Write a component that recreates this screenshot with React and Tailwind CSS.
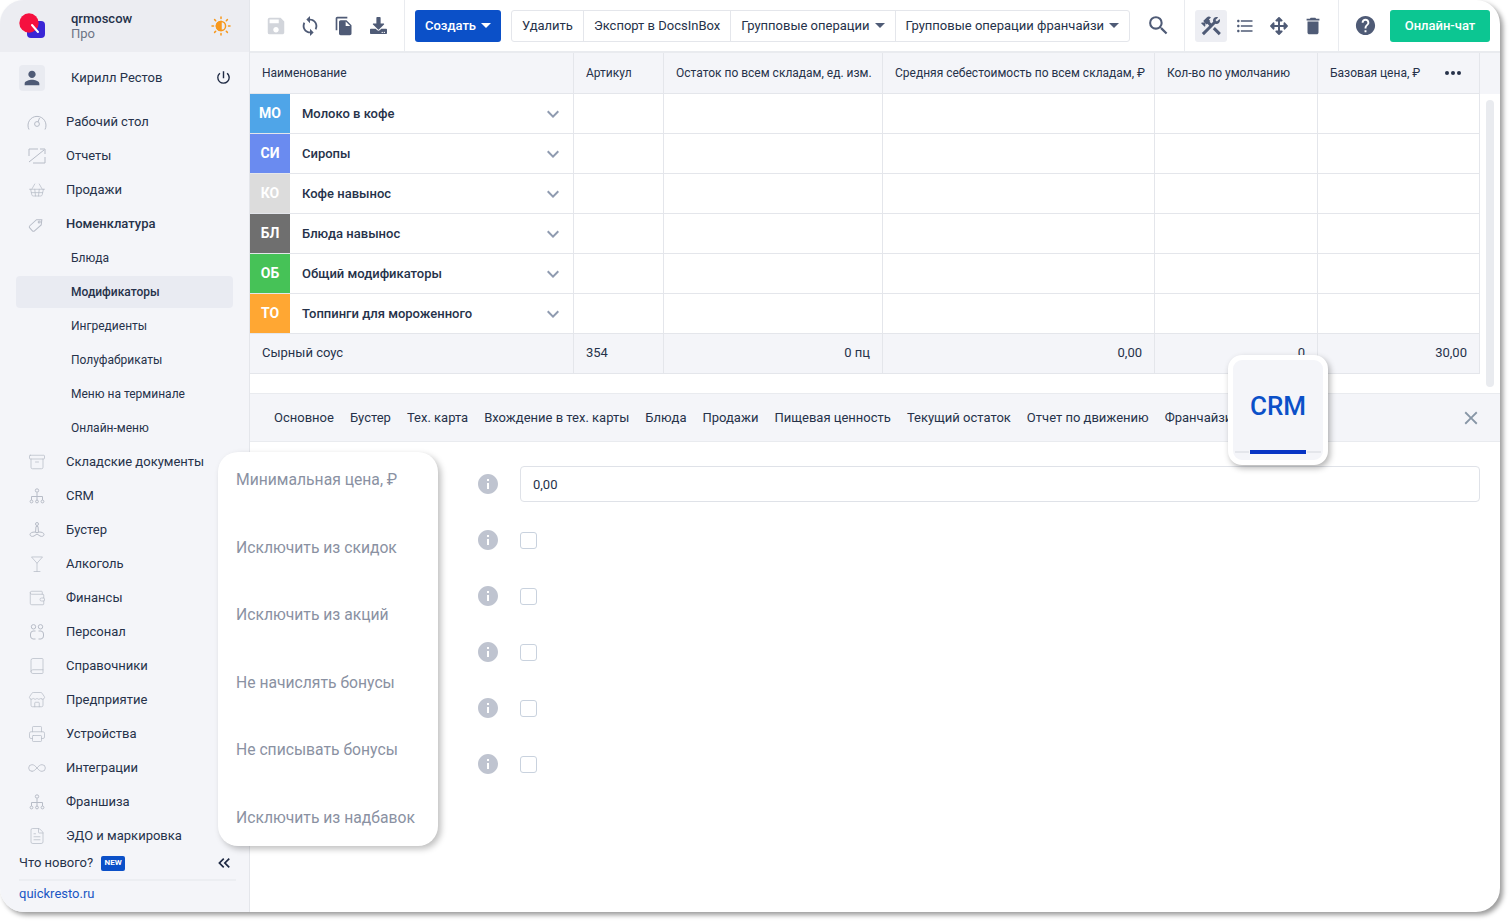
import {
  Archive,
  Book,
  FileText,
  Infinity as InfinityIcon,
  Martini,
  Printer,
  ShoppingBasket,
  Store,
  Wallet,
} from 'lucide-react';
import {
  MdClose,
  MdConstruction,
  MdDelete,
  MdFileCopy,
  MdFormatListBulleted,
  MdHelp,
  MdInfo,
  MdKeyboardArrowDown,
  MdKeyboardDoubleArrowLeft,
  MdPerson,
  MdPowerSettingsNew,
  MdSave,
  MdSearch,
  MdSync,
} from 'react-icons/md';
import { FaArrowsAlt, FaDownload } from 'react-icons/fa';

const font = { fontFamily: 'Roboto, sans-serif' };

function GaugeIcon() {
  return (
    <svg width="20" height="18" viewBox="0 0 20 18" fill="none" stroke="currentColor" strokeWidth="1">
      <path d="M2 16.5a9 9 0 1 1 16 0" />
      <circle cx="10" cy="11" r="2.4" />
      <path d="M11 9l1.5-4" />
    </svg>
  );
}

function ReportIcon() {
  return (
    <svg width="18" height="16" viewBox="0 0 18 16" fill="none" stroke="currentColor" strokeWidth="1">
      <path d="M1 1v7M1 1h9M1 14L16 2M12 1h5v5M17 9v6H5" />
    </svg>
  );
}

function TagIcon() {
  return (
    <svg width="18" height="18" viewBox="0 0 18 18" fill="none" stroke="currentColor" strokeWidth="1">
      <g transform="rotate(-42 9 9)">
        <path d="M2.5 5.5h9l4 3.5-4 3.5h-9a1.5 1.5 0 0 1-1.5-1.5V7a1.5 1.5 0 0 1 1.5-1.5z" />
        <circle cx="12" cy="9" r="1" />
      </g>
    </svg>
  );
}

function TreeIcon() {
  return (
    <svg width="16" height="16" viewBox="0 0 16 16" fill="none" stroke="currentColor" strokeWidth="1">
      <circle cx="8" cy="2.5" r="1.7" />
      <path d="M8 4.5v4M2.5 12V8.5h11V12M8 8.5V12" />
      <circle cx="2.5" cy="13.5" r="1.4" />
      <circle cx="8" cy="13.5" r="1.4" />
      <circle cx="13.5" cy="13.5" r="1.4" />
    </svg>
  );
}

function BoosterIcon() {
  return (
    <svg width="16" height="16" viewBox="0 0 16 16" fill="none" stroke="currentColor" strokeWidth="1">
      <circle cx="8" cy="2" r="1.5" />
      <path d="M7 4.5h2l.5 6h-3zM6 10c-3 0-5 1-5 2.5S3 15 5 14l3-2 3 2c2 1 4 0 4-1.5S13 10 10 10" />
    </svg>
  );
}

function StaffIcon() {
  return (
    <svg width="16" height="16" viewBox="0 0 16 16" fill="none" stroke="currentColor" strokeWidth="1">
      <circle cx="4.5" cy="2.8" r="2.2" />
      <circle cx="11.5" cy="2.8" r="2.2" />
      <path d="M6.5 7H4a3 3 0 0 0-2.5 3v2A3 3 0 0 0 4 15h2.5M9.5 7H12a3 3 0 0 1 2.5 3v2A3 3 0 0 1 12 15H9.5" />
    </svg>
  );
}

function SunIcon() {
  return (
    <svg width="20" height="20" viewBox="0 0 20 20" fill="none" stroke="#f7981d" strokeWidth="1.5" strokeLinecap="round">
      <circle cx="10" cy="10" r="4.6" />
      <path d="M10 5.4a4.6 4.6 0 0 0 0 9.2z" fill="#f7981d" />
      <path d="M10 1v1.5M10 17.5V19M1 10h1.5M17.5 10H19M3.6 3.6l1.1 1.1M15.3 15.3l1.1 1.1M3.6 16.4l1.1-1.1M15.3 4.7l1.1-1.1" />
    </svg>
  );
}

const lucide = { size: 18, strokeWidth: 1 };

const navTop = [
  { label: 'Рабочий стол', icon: <GaugeIcon /> },
  { label: 'Отчеты', icon: <ReportIcon /> },
  { label: 'Продажи', icon: <ShoppingBasket {...lucide} /> },
  { label: 'Номенклатура', icon: <TagIcon />, bold: true },
];

const subItems = ['Блюда', 'Модификаторы', 'Ингредиенты', 'Полуфабрикаты', 'Меню на терминале', 'Онлайн-меню'];

const navBottom = [
  { label: 'Складские документы', icon: <Archive {...lucide} /> },
  { label: 'CRM', icon: <TreeIcon /> },
  { label: 'Бустер', icon: <BoosterIcon /> },
  { label: 'Алкоголь', icon: <Martini {...lucide} /> },
  { label: 'Финансы', icon: <Wallet {...lucide} /> },
  { label: 'Персонал', icon: <StaffIcon /> },
  { label: 'Справочники', icon: <Book {...lucide} /> },
  { label: 'Предприятие', icon: <Store {...lucide} /> },
  { label: 'Устройства', icon: <Printer {...lucide} /> },
  { label: 'Интеграции', icon: <InfinityIcon size={20} strokeWidth={1} /> },
  { label: 'Франшиза', icon: <TreeIcon /> },
  { label: 'ЭДО и маркировка', icon: <FileText {...lucide} /> },
];

const groups = [
  { tag: 'МО', name: 'Молоко в кофе', color: 'bg-[#4fa5e8]' },
  { tag: 'СИ', name: 'Сиропы', color: 'bg-[#6a8bf0]' },
  { tag: 'КО', name: 'Кофе навынос', color: 'bg-[#dcdcdc]' },
  { tag: 'БЛ', name: 'Блюда навынос', color: 'bg-[#6f6f6f]' },
  { tag: 'ОБ', name: 'Общий модификаторы', color: 'bg-[#46c257]' },
  { tag: 'ТО', name: 'Топпинги для мороженного', color: 'bg-[#ffa733]' },
];

const tabs = [
  'Основное',
  'Бустер',
  'Тех. карта',
  'Вхождение в тех. карты',
  'Блюда',
  'Продажи',
  'Пищевая ценность',
  'Текущий остаток',
  'Отчет по движению',
  'Франчайзи',
];

const labels = [
  'Минимальная цена, ₽',
  'Исключить из скидок',
  'Исключить из акций',
  'Не начислять бонусы',
  'Не списывать бонусы',
  'Исключить из надбавок',
];

const cols = 'grid grid-cols-[324px_90px_219px_272px_163px_162px] w-[1230px]';
const cell = 'border-r border-b border-[#e4e6eb] h-10';

function NavRow({ item }) {
  return (
    <div className="flex h-[34px] items-center pl-[19px]">
      <span className="flex w-9 justify-center text-[#b7bcc7]">{item.icon}</span>
      <span className={`ml-[-8px] pl-[19px] text-[13px] text-[#26324a] ${item.bold ? 'font-medium' : ''}`}>
        {item.label}
      </span>
    </div>
  );
}

function Sidebar() {
  return (
    <aside className="flex w-[250px] shrink-0 flex-col rounded-tl-[24px] rounded-bl-[24px] border-r border-[#e4e6eb] bg-[#f4f5f9]">
      <div className="flex h-[52px] items-center rounded-tl-[24px] bg-[#ecedf2] pl-[19px] pr-[18px]">
        <svg width="26" height="26" viewBox="0 0 26 26" className="shrink-0">
          <rect x="8" y="8" width="18" height="17" rx="4" fill="#3a26d6" />
          <circle cx="10" cy="10" r="9.7" fill="#f5103f" />
          <path d="M13 12l6 7" stroke="#fff" strokeWidth="2" strokeLinecap="round" />
        </svg>
        <div className="ml-[26px] flex-1 text-[13px] leading-[15px]">
          <div className="font-medium text-[#26324a]">qrmoscow</div>
          <div className="text-[#6c7485]">Про</div>
        </div>
        <SunIcon />
      </div>
      <div className="flex h-[53px] items-center pb-0.5 pl-[19px] pr-[17px]">
        <span className="flex h-[26px] w-[26px] items-center justify-center rounded-[4px] bg-[#e9ebf1] text-[#4f5b76]">
          <MdPerson size={22} />
        </span>
        <span className="ml-[26px] flex-1 text-[13px] text-[#26324a]">Кирилл Рестов</span>
        <MdPowerSettingsNew size={17} className="text-[#1f2a44]" />
      </div>
      <nav className="flex flex-col">
        {navTop.map((item) => (
          <NavRow key={item.label} item={item} />
        ))}
        {subItems.map((label, i) => (
          <div key={label} className="flex h-[34px] items-center pl-4 pr-4">
            <span
              className={`flex h-8 w-full items-center rounded-[4px] pl-[55px] text-[12px] text-[#26324a] ${
                i === 1 ? 'bg-[#e9ebf2] font-medium' : ''
              }`}
            >
              {label}
            </span>
          </div>
        ))}
        {navBottom.map((item) => (
          <NavRow key={item.label} item={item} />
        ))}
      </nav>
      <div className="flex flex-col pl-[19px] pr-[13px]">
        <div className="flex h-5 items-center">
          <span className="text-[13px] text-[#26324a]">Что нового?</span>
          <span className="ml-2 flex h-[15px] w-6 items-center justify-center rounded-[2px] bg-[#0b50c8] text-[8px] font-bold text-white">
            NEW
          </span>
          <MdKeyboardDoubleArrowLeft size={20} className="ml-auto mr-[2px] text-[#1f2a44]" />
        </div>
        <div className="mt-[6px] h-0.5 bg-[#eceef2]" />
        <a className="mt-[3px] text-[13px] text-[#1a56c4]">quickresto.ru</a>
      </div>
    </aside>
  );
}

function Toolbar() {
  const ops = [
    { label: 'Удалить' },
    { label: 'Экспорт в DocsInBox' },
    { label: 'Групповые операции', caret: true },
    { label: 'Групповые операции франчайзи', caret: true },
  ];
  return (
    <div className="flex h-[53px] items-center border-b-2 border-[#e9ebef] text-[#4f5b76]">
      <div className="flex h-full w-[155px] items-center border-r border-[#e9ebef] pl-[15px]">
        <MdSave size={22} className="text-[#d2d5db]" />
        <MdSync size={22} className="ml-[12px]" />
        <MdFileCopy size={20} className="ml-[13px]" />
        <FaDownload size={17} className="ml-[16px]" />
      </div>
      <button className="ml-[10px] flex h-8 w-[86px] items-center justify-center gap-[5px] rounded-[3px] bg-[#0b50c8] text-[13px] font-medium text-white">
        Создать
        <span className="border-x-[5px] border-t-[5px] border-x-transparent border-t-white" />
      </button>
      <div className="ml-[10px] flex h-8 w-[619px] rounded-[3px] border border-[#e4e6eb] text-[13px] text-[#26324a]">
        {ops.map((op, i) => (
          <div
            key={op.label}
            className={`flex items-center gap-[5px] whitespace-nowrap px-[10px] ${
              i < ops.length - 1 ? 'border-r border-[#e4e6eb]' : ''
            }`}
          >
            {op.label}
            {op.caret && <span className="border-x-[5px] border-t-[5px] border-x-transparent border-t-[#4f5b76]" />}
          </div>
        ))}
      </div>
      <MdSearch size={25} className="ml-4" />
      <div className="ml-[13px] h-full w-px bg-[#e9ebef]" />
      <span className="ml-[10px] flex h-8 w-8 items-center justify-center rounded-[3px] bg-[#edeef3]">
        <MdConstruction size={24} />
      </span>
      <MdFormatListBulleted size={20} className="ml-2" />
      <FaArrowsAlt size={18} className="ml-[15px]" />
      <MdDelete size={22} className="ml-[14px]" />
      <div className="ml-[14px] h-full w-px bg-[#e9ebef]" />
      <MdHelp size={23} className="ml-[15px]" />
      <button className="ml-[13px] h-8 w-[100px] rounded-[3px] bg-[#0cc692] text-[13px] font-medium text-white">
        Онлайн-чат
      </button>
    </div>
  );
}

function DataTable() {
  const heads = [
    'Наименование',
    'Артикул',
    'Остаток по всем складам, ед. изм.',
    'Средняя себестоимость по всем складам, ₽',
    'Кол-во по умолчанию',
  ];
  return (
    <div className="relative h-[340px]">
      <div className="bg-[#f4f5f9]">
        <div className={`${cols} text-[12px] text-[#26324a]`}>
          {heads.map((h) => (
            <div key={h} className={`${cell} h-[41px] flex items-center pl-3`}>
              {h}
            </div>
          ))}
          <div className={`${cell} h-[41px] flex items-center justify-between pl-3 pr-[18px]`}>
            Базовая цена, ₽
            <span className="flex gap-[2px]">
              <i className="h-1 w-1 rounded-full bg-[#26324a]" />
              <i className="h-1 w-1 rounded-full bg-[#26324a]" />
              <i className="h-1 w-1 rounded-full bg-[#26324a]" />
            </span>
          </div>
        </div>
      </div>
      {groups.map((g) => (
        <div key={g.tag} className={cols}>
          <div className={`${cell} flex items-center`}>
            <span className={`flex h-full w-10 items-center justify-center text-[14px] font-bold text-white ${g.color}`}>
              {g.tag}
            </span>
            <span className="ml-3 flex-1 text-[13px] font-medium text-[#26324a]">{g.name}</span>
            <MdKeyboardArrowDown size={24} className="mr-2 text-[#8f9bb0]" />
          </div>
          <div className={cell} />
          <div className={cell} />
          <div className={cell} />
          <div className={cell} />
          <div className={cell} />
        </div>
      ))}
      <div className={`${cols} bg-[#f4f5f9] text-[13px] text-[#26324a]`}>
        <div className={`${cell} flex items-center pb-0.5 pl-3`}>Сырный соус</div>
        <div className={`${cell} flex items-center pb-0.5 pl-3`}>354</div>
        <div className={`${cell} flex items-center justify-end pb-0.5 pr-3`}>0 пц</div>
        <div className={`${cell} flex items-center justify-end pb-0.5 pr-3`}>0,00</div>
        <div className={`${cell} flex items-center justify-end pb-0.5 pr-3`}>0</div>
        <div className={`${cell} flex items-center justify-end pb-0.5 pr-3`}>30,00</div>
      </div>
      <div className="absolute right-[6px] top-[47px] h-[287px] w-2 rounded-full bg-[#e9ebef]" />
    </div>
  );
}

function Tabs() {
  return (
    <div className="flex h-[49px] items-center justify-between border-y border-[#e9ebef] bg-[#f4f5f9] pl-6 pr-[18px]">
      <div className="flex gap-4 text-[13px] text-[#26324a]">
        {tabs.map((t) => (
          <span key={t}>{t}</span>
        ))}
      </div>
      <MdClose size={22} className="text-[#8796a6]" />
    </div>
  );
}

function FormFields() {
  return (
    <div className="flex flex-col gap-5 pl-[226px] pr-5 pt-6">
      <div className="flex h-9 items-center">
        <MdInfo size={24} className="text-[#bfc4d0]" />
        <div className="ml-5 flex h-9 flex-1 items-center rounded-[4px] border border-[#dfe2e8] pl-3 pt-[1px] text-[13px] text-[#26324a]">
          0,00
        </div>
      </div>
      {[0, 1, 2, 3, 4].map((i) => (
        <div key={i} className="flex h-9 items-center">
          <MdInfo size={24} className="text-[#bfc4d0]" />
          <span className="ml-5 h-[17px] w-[17px] rounded-[3px] border border-[#c9d2de]" />
        </div>
      ))}
    </div>
  );
}

export default function App() {
  return (
    <div className="h-[921px] w-[1509px] overflow-hidden bg-white" style={font}>
      <div className="relative flex h-[912px] w-[1500px] rounded-[24px] bg-white shadow-[3px_3px_5px_rgba(0,0,0,0.4)]">
        <Sidebar />
        <main className="min-w-0 flex-1">
          <Toolbar />
          <DataTable />
          <Tabs />
          <FormFields />
        </main>

        {/* выноска с подписями полей */}
        <div className="absolute left-[218px] top-[452px] flex h-[394px] w-[220px] flex-col justify-between rounded-[20px] bg-white py-[18px] pl-[18px] text-[15.7px] text-[#8a91a2] shadow-[3px_3px_6px_rgba(0,0,0,0.25)]">
          {labels.map((l) => (
            <div key={l} className="leading-[20px]">
              {l}
            </div>
          ))}
        </div>

        {/* выноска вкладки CRM */}
        <div className="absolute left-[1228px] top-[355px] h-[110px] w-[100px] rounded-[14px] border-[5px] border-white bg-[#f4f5f9] shadow-[2px_3px_6px_rgba(0,0,0,0.3)]">
          <div className="flex h-[90px] items-center justify-center pt-0.5 text-[26px] font-medium text-[#0b50c8]">CRM</div>
          <div className="flex items-center px-[2px]">
            <span className="h-0.5 flex-1 bg-[#e4e6eb]" />
            <span className="mx-[1px] h-1 w-14 bg-[#0533c4]" />
            <span className="h-0.5 flex-1 bg-[#e4e6eb]" />
          </div>
        </div>
      </div>
    </div>
  );
}
